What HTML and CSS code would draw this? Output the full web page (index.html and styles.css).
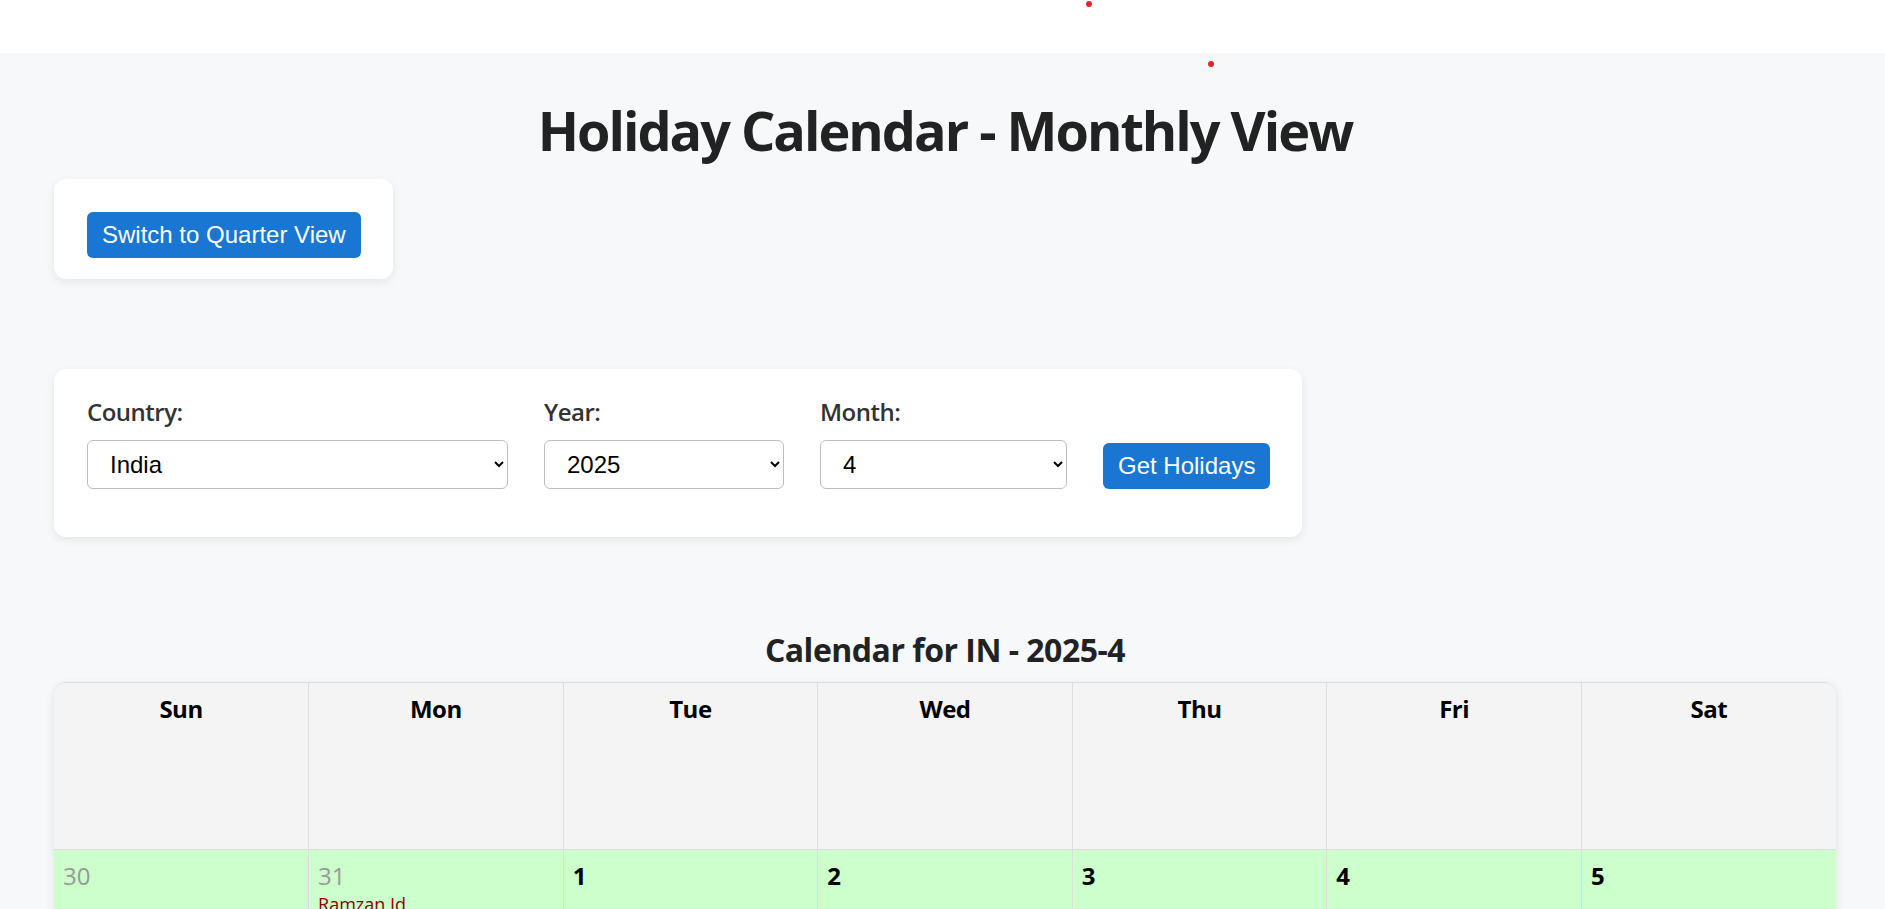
FILE: index.html
```html
<!DOCTYPE html>
<html lang="en">
<head>
<meta charset="utf-8">
<title>Holiday Calendar - Monthly View</title>
<link rel="stylesheet" href="styles.css">
</head>
<body>
<div class="topbar"></div>
<span class="dot dot-a"></span>
<span class="dot dot-b"></span>
<main class="page">
  <h1 class="page-title">Holiday Calendar - Monthly View</h1>
  <section class="card card-switch">
    <button class="btn">Switch to Quarter View</button>
  </section>
  <section class="card card-form">
    <div class="field">
      <label class="field-label" for="country">Country:</label>
      <select id="country" class="select select-country"><option>India</option></select>
    </div>
    <div class="field">
      <label class="field-label" for="year">Year:</label>
      <select id="year" class="select select-year"><option>2025</option></select>
    </div>
    <div class="field">
      <label class="field-label" for="month">Month:</label>
      <select id="month" class="select select-month"><option>4</option></select>
    </div>
    <button class="btn btn-get">Get Holidays</button>
  </section>
  <section class="calendar">
    <h2 class="calendar-title">Calendar for IN - 2025-4</h2>
    <div class="calendar-frame">
      <table class="calendar-table">
        <thead>
          <tr><th>Sun</th><th>Mon</th><th>Tue</th><th>Wed</th><th>Thu</th><th>Fri</th><th>Sat</th></tr>
        </thead>
        <tbody>
          <tr>
            <td><div class="day other">30</div></td>
            <td><div class="day other">31</div><div class="holiday">Ramzan Id</div></td>
            <td><div class="day">1</div></td>
            <td><div class="day">2</div></td>
            <td><div class="day">3</div></td>
            <td><div class="day">4</div></td>
            <td><div class="day">5</div></td>
          </tr>
        </tbody>
      </table>
    </div>
  </section>
</main>
</body>
</html>
```
FILE: styles.css
```css
* { box-sizing: border-box; }
html, body { margin: 0; padding: 0; }
body {
  background: #f7f8fa;
  font-family: "Segoe UI", "Open Sans", "Noto Sans", sans-serif;
  color: #222;
  position: relative;
}
.topbar { height: 53px; background: #fff; }
.dot {
  position: absolute;
  width: 6px; height: 6px;
  border-radius: 50%;
  background: #e8222b;
}
.dot-a { left: 1086px; top: 1px; }
.dot-b { left: 1208px; top: 61px; }

.page { padding: 0 49px 0 54px; }

.page-title {
  margin: 0;
  padding-top: 37px;
  padding-bottom: 6px;
  text-align: center;
  font-size: 54px;
  line-height: 80px;
  font-weight: 700;
  letter-spacing: -2px;
  color: #222;
}

.card {
  background: #fff;
  border-radius: 12px;
  box-shadow: 0 3px 10px rgba(0, 0, 0, 0.08);
}
.card-switch {
  width: fit-content;
  margin-top: 3px;
  padding: 33px 32px 21px 33px;
}
.card-switch .btn { display: block; }

.btn {
  font-family: "Liberation Sans", Arial, sans-serif;
  font-size: 24px;
  line-height: 28px;
  color: #fff;
  background: #1976d2;
  border: 0;
  border-radius: 6px;
  padding: 9px 15px;
  height: 46px;
}

.card-form {
  width: fit-content;
  margin-top: 90px;
  padding: 27px 32px 48px 33px;
  display: flex;
  align-items: flex-end;
  gap: 36px;
}
.field { display: flex; flex-direction: column; }
.field-label {
  font-size: 24px;
  line-height: 32px;
  font-weight: 600;
  color: #333;
  margin-bottom: 12px;
  letter-spacing: -0.5px;
}
.select {
  font-family: "Liberation Sans", Arial, sans-serif;
  font-size: 24px;
  height: 49px;
  padding: 0 12px 0 18px;
  border: 1.5px solid #bdbdbd;
  border-radius: 6px;
  background-color: #fff;
  color: #000;
}
.select-country { width: 421px; }
.select-year { width: 240px; }
.select-month { width: 247px; }

.calendar { margin-top: 91px; }
.calendar-title {
  margin: 0 0 10px;
  text-align: center;
  font-size: 32px;
  line-height: 44px;
  font-weight: 700;
  letter-spacing: -0.5px;
  color: #222;
}
.calendar-frame {
  border-radius: 12px;
  overflow: hidden;
  box-shadow: 0 3px 10px rgba(0, 0, 0, 0.1);
  border-top: 1.5px solid #dcdcdc;
}
.calendar-table {
  width: 100%;
  border-collapse: collapse;
  table-layout: fixed;
}
.calendar-table th,
.calendar-table td {
  border-left: 1px solid #dedede;
  border-bottom: 1.5px solid #dedede;
  vertical-align: top;
  padding: 9px;
}
.calendar-table th:first-child,
.calendar-table td:first-child { border-left: 0; }
.calendar-table th {
  background: #f4f4f4;
  height: 166px;
  font-size: 24px;
  line-height: 34px;
  font-weight: 700;
  color: #000;
  text-align: center;
  letter-spacing: -0.5px;
}
.calendar-table td {
  background: #ccffcc;
  height: 166px;
  text-align: left;
}
.day {
  font-size: 24px;
  line-height: 34px;
  font-weight: 700;
  color: #000;
}
.day.other { font-weight: 400; color: #999; }
.holiday {
  margin-top: 0;
  font-size: 18px;
  line-height: 22px;
  color: #8b0000;
}
```
